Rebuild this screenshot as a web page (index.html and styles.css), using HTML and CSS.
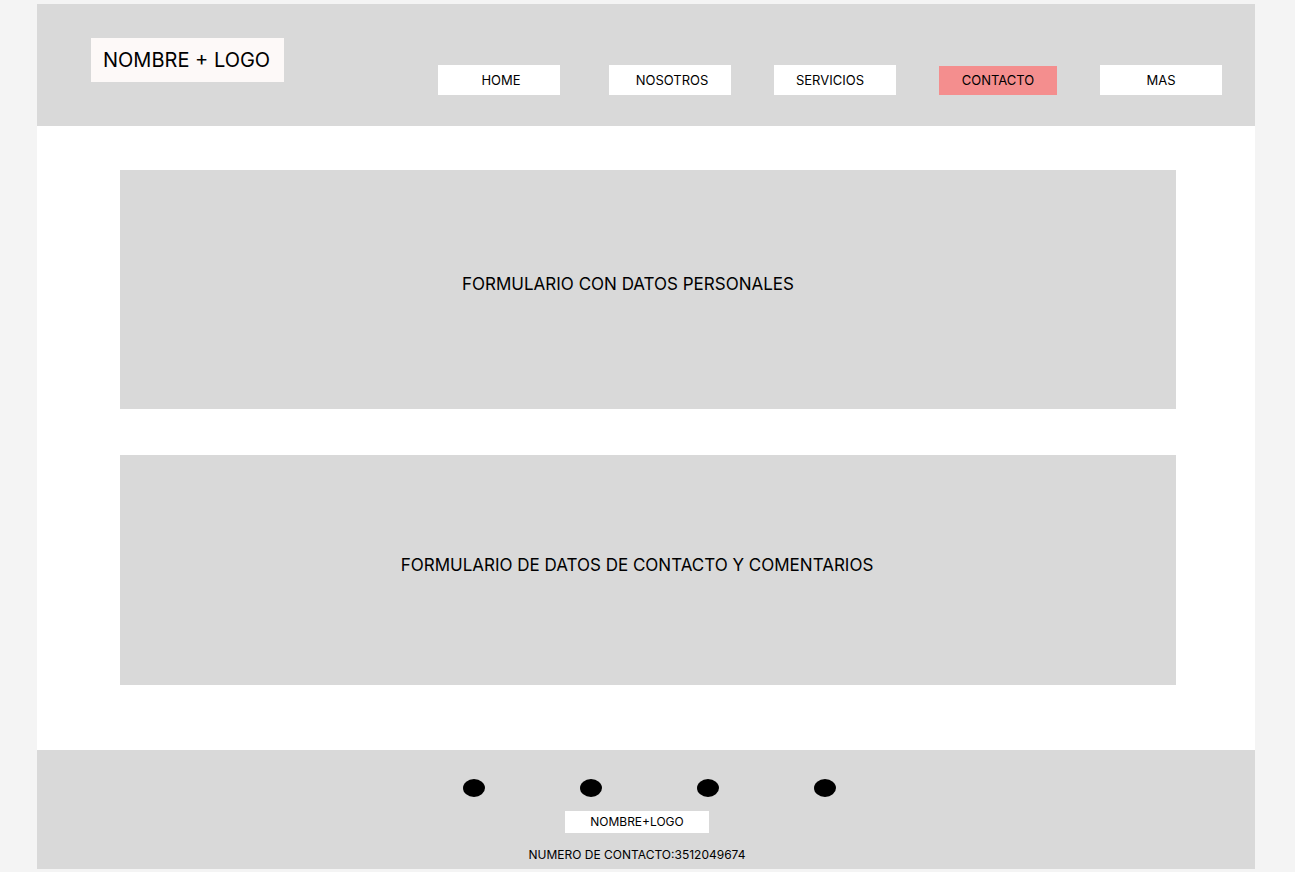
FILE: index.html
```html
<!DOCTYPE html>
<html lang="es">
<head>
  <meta charset="utf-8">
  <meta name="viewport" content="width=device-width, initial-scale=1">
  <title>Contacto</title>
  <link rel="stylesheet" href="styles.css">
</head>
<body>
  <div class="page">
    <header class="header">
      <a class="brand" href="#">NOMBRE + LOGO</a>
      <nav class="nav">
        <a class="nav-link nav-home" href="#">HOME</a>
        <a class="nav-link nav-about" href="#">NOSOTROS</a>
        <a class="nav-link nav-services" href="#">SERVICIOS</a>
        <a class="nav-link nav-current" href="#" aria-current="page">CONTACTO</a>
        <a class="nav-link" href="#">MAS</a>
      </nav>
    </header>
    <main class="main">
      <section class="panel panel-personal">
        <h2 class="panel-title">FORMULARIO CON DATOS PERSONALES</h2>
      </section>
      <section class="panel panel-contact">
        <h2 class="panel-title">FORMULARIO DE DATOS DE CONTACTO Y COMENTARIOS</h2>
      </section>
    </main>
    <footer class="footer">
      <div class="dots">
        <span class="dot"></span>
        <span class="dot"></span>
        <span class="dot"></span>
        <span class="dot"></span>
      </div>
      <div class="footer-info">
        <a class="footer-brand" href="#">NOMBRE+LOGO</a>
        <p class="footer-phone">NUMERO DE CONTACTO:3512049674</p>
      </div>
    </footer>
  </div>
</body>
</html>
```
FILE: styles.css
```css
* {
  box-sizing: border-box;
}

body {
  margin: 0;
  background: #f4f4f4;
  color: #000;
  font-family: Inter, "Liberation Sans", sans-serif;
}

a {
  color: inherit;
  text-decoration: none;
}

.page {
  margin: 4px 40px 2px 37px;
  background: #fff;
}

.header {
  display: flex;
  justify-content: space-between;
  align-items: flex-start;
  padding: 34px 33px 31px 54px;
  background: #d9d9d9;
}

.brand {
  min-width: 193px;
  padding: 8px 12px;
  background: #fdf9f8;
  font-size: 20px;
  line-height: 28px;
  white-space: nowrap;
}

.nav {
  display: flex;
  align-items: flex-end;
  gap: 43px;
  padding-top: 27px;
}

.nav-link {
  width: 122px;
  padding: 5px 0;
  background: #fff;
  font-size: 13px;
  line-height: 20px;
  text-align: center;
}

.nav-home {
  margin-right: 6px;
  padding-left: 4px;
}

.nav-about {
  padding-left: 4px;
}

.nav-services {
  padding-right: 10px;
}

.nav-current {
  width: 118px;
  padding: 4px 0 5px;
  background: #f48e8e;
}

.main {
  display: grid;
  gap: 46px;
  padding: 44px 79px 65px 83px;
}

.panel {
  display: flex;
  align-items: center;
  justify-content: center;
  background: #d9d9d9;
}

.panel-personal {
  min-height: 239px;
  padding: 0 40px 11px 0;
}

.panel-contact {
  min-height: 230px;
  padding: 0 22px 10px 0;
}

.panel-title {
  margin: 0;
  font-size: 17px;
  font-weight: 400;
  line-height: 24px;
}

.footer {
  padding: 29px 0 5px;
  background: #d9d9d9;
  font-size: 12px;
}

.dots {
  display: flex;
  justify-content: center;
  gap: 95px;
  padding-left: 6px;
}

.dot {
  width: 22px;
  height: 18px;
  border-radius: 50%;
  background: #000;
}

.footer-info {
  display: flex;
  flex-direction: column;
  align-items: center;
  gap: 13px;
  padding: 14px 18px 0 0;
}

.footer-brand {
  padding: 2px 25px;
  background: #fff;
  line-height: 18px;
}

.footer-phone {
  margin: 0;
  line-height: 18px;
}
```
